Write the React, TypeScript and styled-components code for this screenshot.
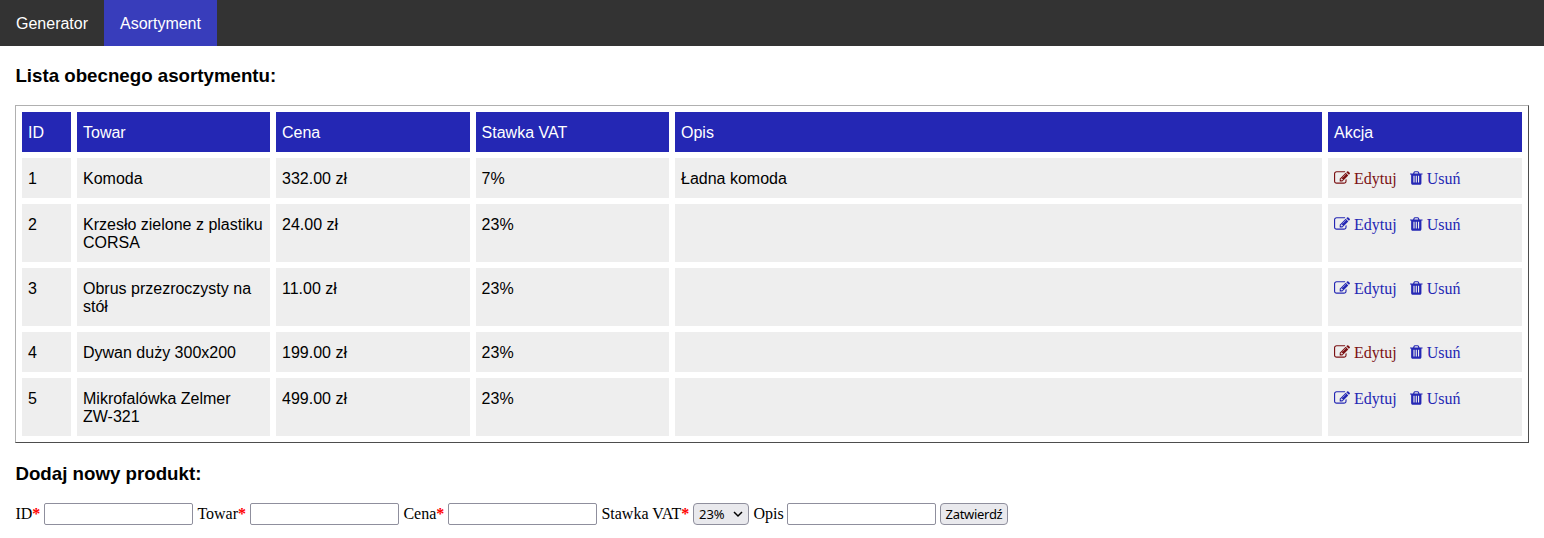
import React from "react";
import styled, { createGlobalStyle } from "styled-components";

const GlobalStyle = createGlobalStyle`
  body {
    margin: 0;
    background: #fff;
    color: #000;
    font-family: "Liberation Serif", "Times New Roman", serif;
    font-size: 16px;
  }
`;

const Nav = styled.nav`
  display: flex;
  height: 46px;
  background: #333;
`;

const NavLink = styled.a<{ $active?: boolean }>`
  padding: 15px 16px 13px;
  line-height: 18px;
  color: #fff;
  background: ${(p) => (p.$active ? "#383dbb" : "transparent")};
  font-family: "Liberation Sans", Arial, sans-serif;
`;

const Content = styled.main`
  padding: 0 15px;
`;

const Heading = styled.h3`
  margin: 0;
  padding: 19px 0;
  line-height: 21px;
  font-family: "Liberation Sans", Arial, sans-serif;
  font-size: 18.72px;
  text-indent: 0.4px;
`;

const Table = styled.table`
  width: 1514px;
  margin-bottom: 1px;
  table-layout: fixed;
  border: 1px solid;
  border-color: #b0b0b0 #4d4d4d #4d4d4d #b0b0b0;
  border-collapse: separate;
  border-spacing: 6px;
  font-family: "Liberation Sans", Arial, sans-serif;
`;

const Cell = styled.td<{ $head?: boolean }>`
  padding: 12px 6px 10px;
  line-height: 18px;
  vertical-align: top;
  color: ${(p) => (p.$head ? "#fff" : "#000")};
  background: ${(p) => (p.$head ? "#2427b4" : "#eee")};

  &:nth-child(4) {
    padding-left: 5.6px;
  }
`;

const Actions = styled.div`
  display: flex;
  gap: 13.4px;
  height: 18px;
  font-family: "Liberation Serif", "Times New Roman", serif;
`;

const Action = styled.a<{ $visited?: boolean }>`
  display: flex;
  align-items: center;
  gap: 4px;
  line-height: 20px;
  color: ${(p) => (p.$visited ? "#7b1113" : "#2427b4")};
`;

const Icon = styled.svg`
  height: 16px;
  margin-top: -2px;
  fill: currentColor;
`;

const Form = styled.form`
  display: flex;
  align-items: center;
  gap: 4px;
  height: 22px;
`;

const Label = styled.label<{ $width: number }>`
  width: ${(p) => p.$width}px;
  text-indent: 0.4px;
  white-space: nowrap;
`;

const Required = styled.span`
  color: #f00;
  font-weight: bold;
`;

const Input = styled.input`
  box-sizing: border-box;
  width: 149px;
  height: 22px;
  margin: 0;
  border: 1px solid #8f8f9d;
  border-radius: 2px;
  background: #fff;
`;

const SelectBox = styled.div`
  box-sizing: border-box;
  display: flex;
  align-items: center;
  justify-content: space-between;
  width: 56px;
  height: 22px;
  padding: 0 5px;
  border: 1px solid #8f8f9d;
  border-radius: 4px;
  background: #e9e9ed;
  font: 13px "Noto Sans", sans-serif;
`;

const Chevron = styled.svg`
  width: 10px;
  height: 10px;
  fill: none;
  stroke: #000;
  stroke-width: 1.5;
`;

const Button = styled.button`
  box-sizing: border-box;
  width: 68px;
  height: 22px;
  margin: 0;
  padding: 0;
  border: 1px solid #8f8f9d;
  border-radius: 4px;
  background: #e9e9ed;
  color: #000;
  font: 13px "Noto Sans", sans-serif;
  letter-spacing: -0.3px;
`;

const EditIcon = () => (
  <Icon width="16" viewBox="0 0 1792 1792">
    <path d="M888 1184l116-116-152-152-116 116v56h96v96h56zm440-720q-16-16-33 1l-350 350q-17 17-1 33t33-1l350-350q17-17 1-33zm80 594v190q0 119-84.500 203.500t-203.500 84.500h-832q-119 0-203.500-84.500t-84.500-203.500v-832q0-119 84.500-203.500t203.500-84.500h832q63 0 117 25 15 7 18 23 3 17-9 29l-49 49q-14 14-32 8-23-6-45-6h-832q-66 0-113 47t-47 113v832q0 66 47 113t113 47h832q66 0 113-47t47-113v-126q0-13 9-22l64-64q15-15 35-7t20 29zm-96-738l288 288-672 672h-288v-288zm444 132l-92 92-288-288 92-92q28-28 68-28t68 28l152 152q28 28 28 68t-28 68z" />
  </Icon>
);

const TrashIcon = () => (
  <Icon width="12.57" viewBox="192 0 1408 1792">
    <path d="M704 1376v-704q0-14-9-23t-23-9h-64q-14 0-23 9t-9 23v704q0 14 9 23t23 9h64q14 0 23-9t9-23zm256 0v-704q0-14-9-23t-23-9h-64q-14 0-23 9t-9 23v704q0 14 9 23t23 9h64q14 0 23-9t9-23zm256 0v-704q0-14-9-23t-23-9h-64q-14 0-23 9t-9 23v704q0 14 9 23t23 9h64q14 0 23-9t9-23zm-544-992h448l-48-117q-7-9-17-11h-317q-10 2-17 11zm928 32v64q0 14-9 23t-23 9h-96v948q0 83-47 143.500t-113 60.500h-832q-66 0-113-58.500t-47-141.500v-952h-96q-14 0-23-9t-9-23v-64q0-14 9-23t23-9h309l70-167q15-37 54-63t79-26h320q40 0 79 26t54 63l70 167h309q14 0 23 9t9 23z" />
  </Icon>
);

const columns = [
  { name: "ID", width: 49 },
  { name: "Towar", width: 193 },
  { name: "Cena", width: 194 },
  { name: "Stawka VAT", width: 193 },
  { name: "Opis", width: 647 },
  { name: "Akcja", width: 194 },
];

const products = [
  { id: 1, name: "Komoda", price: "332.00 zł", vat: "7%", note: "Ładna komoda", visited: true },
  { id: 2, name: "Krzesło zielone z plastiku CORSA", price: "24.00 zł", vat: "23%", note: "", visited: false },
  { id: 3, name: "Obrus przezroczysty na stół", price: "11.00 zł", vat: "23%", note: "", visited: false },
  { id: 4, name: "Dywan duży 300x200", price: "199.00 zł", vat: "23%", note: "", visited: true },
  { id: 5, name: "Mikrofalówka Zelmer ZW-321", price: "499.00 zł", vat: "23%", note: "", visited: false },
];

export default function App() {
  return (
    <>
      <GlobalStyle />
      <Nav>
        <NavLink>Generator</NavLink>
        <NavLink $active>Asortyment</NavLink>
      </Nav>
      <Content>
        <Heading>Lista obecnego asortymentu:</Heading>
        <Table>
          <colgroup>
            {columns.map((c) => (
              <col key={c.name} width={c.width} />
            ))}
          </colgroup>
          <tbody>
            <tr>
              {columns.map((c) => (
                <Cell key={c.name} $head>
                  {c.name}
                </Cell>
              ))}
            </tr>
            {products.map((p) => (
              <tr key={p.id}>
                <Cell>{p.id}</Cell>
                <Cell>{p.name}</Cell>
                <Cell>{p.price}</Cell>
                <Cell>{p.vat}</Cell>
                <Cell>{p.note}</Cell>
                <Cell>
                  <Actions>
                    <Action $visited={p.visited}>
                      <EditIcon />
                      Edytuj
                    </Action>
                    <Action>
                      <TrashIcon />
                      Usuń
                    </Action>
                  </Actions>
                </Cell>
              </tr>
            ))}
          </tbody>
        </Table>
        <Heading>Dodaj nowy produkt:</Heading>
        <Form>
          <Label $width={25}>ID<Required>*</Required></Label>
          <Input />
          <Label $width={49}>Towar<Required>*</Required></Label>
          <Input />
          <Label $width={41}>Cena<Required>*</Required></Label>
          <Input />
          <Label $width={88}>Stawka VAT<Required>*</Required></Label>
          <SelectBox>
            23%
            <Chevron viewBox="0 0 10 10">
              <path d="M1 3l4 4 4-4" />
            </Chevron>
          </SelectBox>
          <Label $width={30}>Opis</Label>
          <Input />
          <Button type="button">Zatwierdź</Button>
        </Form>
      </Content>
    </>
  );
}
